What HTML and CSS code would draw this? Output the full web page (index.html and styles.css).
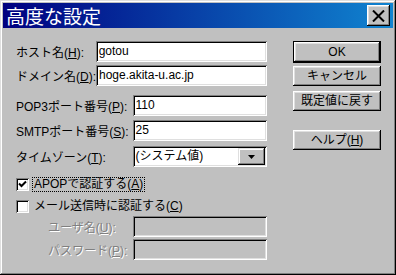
FILE: index.html
```html
<!DOCTYPE html>
<html lang="ja">
<head>
<meta charset="utf-8">
<link rel="stylesheet" href="styles.css">
</head>
<body>
<div class="win">
  <div class="title">
    <span class="ttext">高度な設定</span>
    <div class="close"><svg width="13" height="12" viewBox="0 0 13 12"><path d="M1 0.5 L12 11.5 M12 0.5 L1 11.5" stroke="#000" stroke-width="2" fill="none"/></svg></div>
  </div>
  <div class="client">
    <div class="form">
      <div class="row r1"><span class="lbl w1">ホスト名(<u>H</u>):</span><div class="edit e1">gotou</div></div>
      <div class="row r2"><span class="lbl w1">ドメイン名(<u>D</u>):</span><div class="edit e1">hoge.akita-u.ac.jp</div></div>
      <div class="row r3"><span class="lbl w2">POP3ポート番号(<u>P</u>):</span><div class="edit e2">110</div></div>
      <div class="row r4"><span class="lbl w2">SMTPポート番号(<u>S</u>):</span><div class="edit e2">25</div></div>
      <div class="row r5"><span class="lbl w2">タイムゾーン(<u>T</u>):</span><div class="edit e2 combo"><span class="ctext">(システム値)</span><div class="dd"><svg width="7" height="4" viewBox="0 0 7 4"><path d="M0 0 H7 L3.5 4 Z" fill="#000"/></svg></div></div></div>
      <div class="crow c1"><span class="chk"><svg width="9" height="9" viewBox="0 0 9 9"><path d="M1 3.5 L3.5 6 L8 1.5" stroke="#000" stroke-width="2" fill="none"/></svg></span><span class="ctl focus">APOPで認証する(<u>A</u>)</span></div>
      <div class="crow c2"><span class="chk"></span><span class="ctl">メール送信時に認証する(<u>C</u>)</span></div>
      <div class="row r6"><span class="lbl w2 dis">ユーザ名(<u>U</u>):</span><div class="edit e2 off"></div></div>
      <div class="row r7"><span class="lbl w2 dis">パスワード(<u>P</u>):</span><div class="edit e2 off"></div></div>
    </div>
    <div class="btns">
      <div class="btn def"><span class="bin">OK</span></div>
      <div class="btn b2">キャンセル</div>
      <div class="btn b3">既定値に戻す</div>
      <div class="btn b4">ヘルプ(<u>H</u>)</div>
    </div>
  </div>
</div>
</body>
</html>
```
FILE: styles.css
```css
html, body { margin: 0; padding: 0; background: #c0c0c0; }
body { font-family: "Liberation Sans", "Noto Sans CJK JP", sans-serif; font-size: 12px; color: #000; }
.win {
  width: 396px; height: 275px; box-sizing: border-box; padding: 3px;
  background: #c0c0c0;
  box-shadow: inset -1px -1px #000, inset 1px 1px #dfdfdf, inset -2px -2px #808080, inset 2px 2px #fff;
}
.title {
  height: 25px; display: flex; align-items: center; justify-content: space-between;
  background: linear-gradient(to right, #000080, #1084d0);
  padding: 0 3px 0 3px;
}
.ttext { color: #fff; font-family: "Noto Sans CJK JP", sans-serif; font-size: 19px; line-height: 25px; }
.close {
  width: 23px; height: 21px; box-sizing: border-box; background: #c0c0c0;
  display: flex; align-items: center; justify-content: center;
  box-shadow: inset -1px -1px #000, inset 1px 1px #fff, inset -2px -2px #808080, inset 2px 2px #dfdfdf;
}
.client { display: flex; padding-left: 13px; }
.form { width: 251px; display: flex; flex-direction: column; }
.row { display: flex; align-items: center; height: 21px; }
.r1 { margin-top: 13px; }
.r2 { margin-top: 3px; }
.r3 { margin-top: 9px; }
.r4 { margin-top: 4px; }
.r5 { margin-top: 5px; }
.r6 { margin-top: 2px; }
.r7 { margin-top: 2px; }
.lbl { white-space: nowrap; box-sizing: border-box; }
.w1 { width: 80px; }
.w2 { width: 117px; }
.edit {
  height: 21px; box-sizing: border-box; background: #fff; padding: 2px 0 0 3px; line-height: 17px;
  box-shadow: inset 1px 1px #808080, inset -1px -1px #fff, inset 2px 2px #000, inset -2px -2px #dfdfdf;
}
.e1 { width: 172px; }
.e2 { width: 135px; }
.off { background: #c0c0c0; }
.combo { display: flex; justify-content: space-between; padding-right: 2px; }
.dd {
  width: 27px; height: 17px; box-sizing: border-box; background: #c0c0c0;
  display: flex; align-items: center; justify-content: center;
  box-shadow: inset -1px -1px #000, inset 1px 1px #dfdfdf, inset -2px -2px #808080, inset 2px 2px #fff;
}
.crow { display: flex; align-items: center; height: 15px; }
.c1 { margin-top: 10px; }
.c2 { margin-top: 7px; }
.chk {
  width: 13px; height: 13px; box-sizing: border-box; background: #fff;
  display: flex; align-items: center; justify-content: center;
  box-shadow: inset 1px 1px #808080, inset -1px -1px #fff, inset 2px 2px #000, inset -2px -2px #dfdfdf;
}
.ctl { margin-left: 4px; padding: 0 1px; line-height: 13px; white-space: nowrap; }
.focus { outline: 1px dotted #000; }
.dis { color: #808080; text-shadow: 1px 1px #fff; padding-left: 32px; }
.btns { display: flex; flex-direction: column; margin-left: 26px; padding-top: 13px; }
.btn {
  width: 88px; height: 20px; box-sizing: border-box; background: #c0c0c0;
  display: flex; align-items: center; justify-content: center; line-height: 14px;
  box-shadow: inset -1px -1px #000, inset 1px 1px #fff, inset -2px -2px #808080, inset 2px 2px #dfdfdf;
}
.def { height: 22px; box-shadow: inset 0 0 0 1px #000, inset -2px -2px #000, inset 2px 2px #fff, inset -3px -3px #808080, inset 3px 3px #dfdfdf; }
.b2 { margin-top: 3px; }
.b3 { margin-top: 5px; }
.b4 { margin-top: 19px; }
```
